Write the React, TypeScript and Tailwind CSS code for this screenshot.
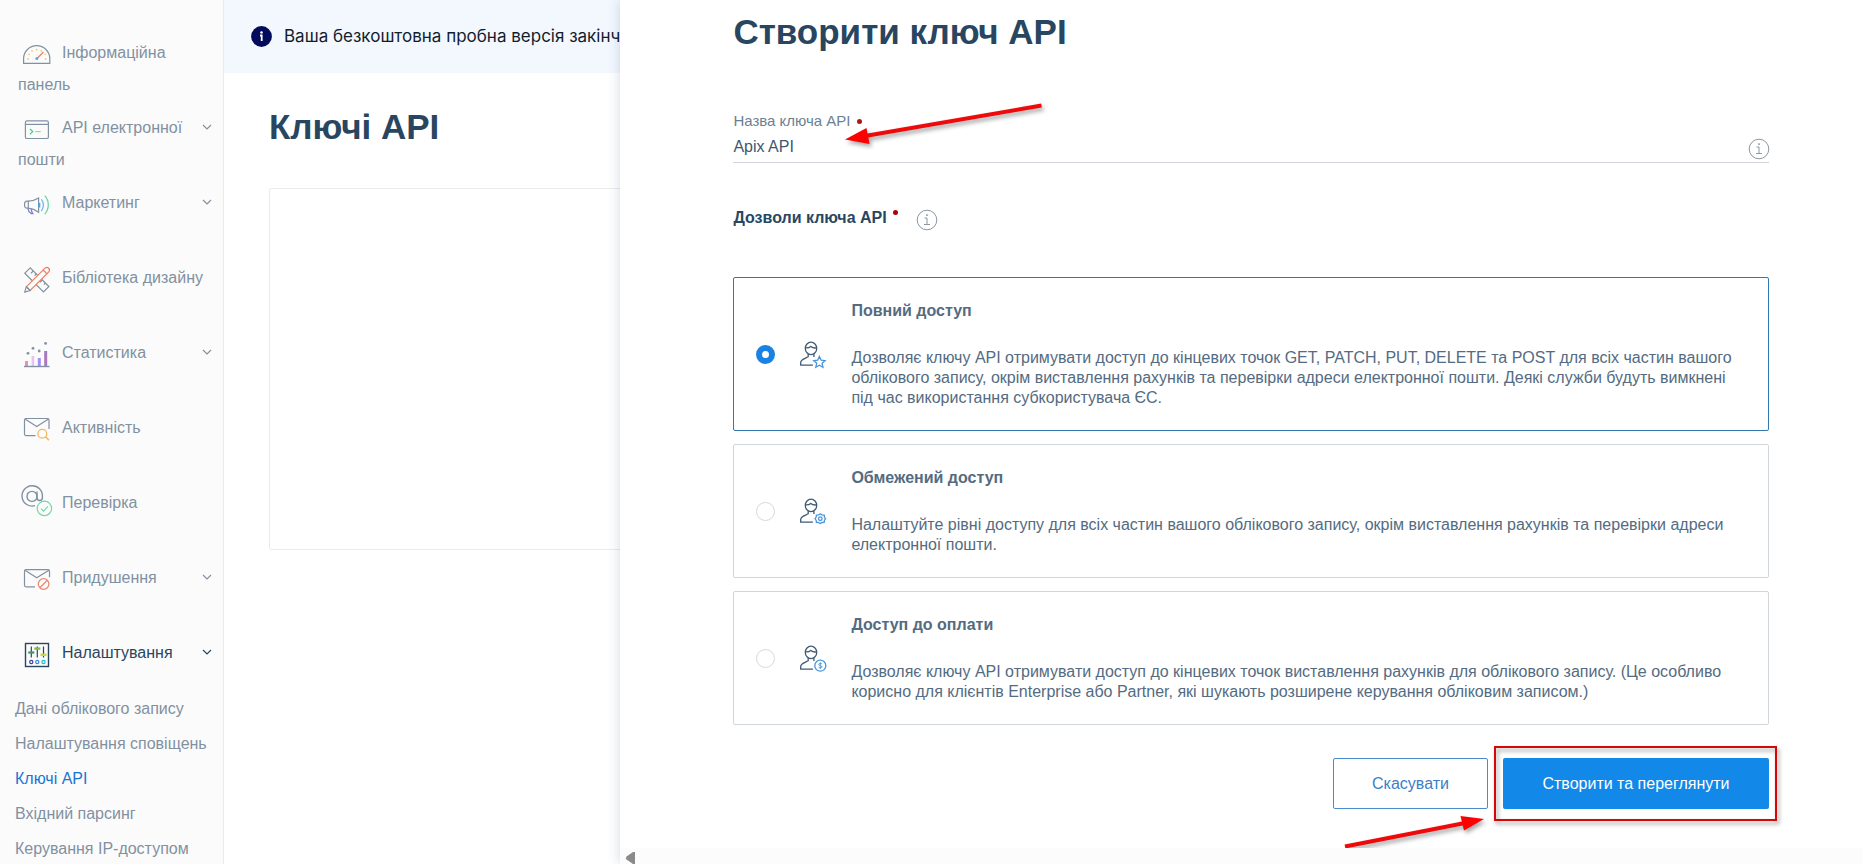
import React from 'react'
import { clsx } from 'clsx'

const IconBox = ({ children }: { children: React.ReactNode }) => (
  <svg
    viewBox="0 0 32 32"
    fill="none"
    stroke="currentColor"
    strokeWidth="1.2"
    className="-my-1 ml-[3px] mr-[9px] inline-block h-8 w-8 overflow-visible align-middle"
    aria-hidden="true"
  >
    {children}
  </svg>
)

const DashboardIcon = () => (
  <IconBox>
    <path d="M2.6 25.4V20.5a13.1 12.8 0 0 1 26.2 0v4.9z" />
    <path d="M16.5 20l6-6" stroke="#ef7c5c" />
    <circle cx="15.8" cy="20.6" r="1.5" fill="#5aa9e6" stroke="none" />
    <g fill="#f7c878" stroke="none">
      <circle cx="7" cy="21" r="0.9" />
      <circle cx="8" cy="16.3" r="0.9" />
      <circle cx="11" cy="13" r="0.9" />
      <circle cx="15.7" cy="11.7" r="0.9" />
      <circle cx="20.3" cy="13" r="0.9" />
      <circle cx="24.3" cy="16.3" r="0.9" />
      <circle cx="24.6" cy="21" r="0.9" />
    </g>
  </IconBox>
)

const TerminalIcon = () => (
  <IconBox>
    <rect x="4.4" y="7.9" width="23" height="17.6" rx="1.6" />
    <path d="M4.4 11.4h23" />
    <path d="M9 16l2.7 2.6L9 21.2" stroke="#3fd08f" />
    <path d="M14.3 18.6h5.4" stroke="#b5d56a" />
  </IconBox>
)

const MarketingIcon = () => (
  <IconBox>
    <path d="M7.3 13.2c3.6-.2 7.2-1.2 10.3-3.2v14.2c-3-2.2-6.7-3.7-10.3-4z" />
    <path d="M7.3 13.2H6.1a2.6 3.5 0 0 0 0 7h1.2" />
    <path d="M6.8 20.4c.4 2.5 1.6 4.2 3.3 5.2h1.7c-.9-1.3-1.5-3-1.6-4.7" stroke="#8079d6" />
    <path d="M18.3 15v4.5" stroke="#4aa3ea" strokeWidth="2" />
    <path d="M20.3 11.3c2.8 3 2.8 8.5 0 11.8" stroke="#62b5ee" />
    <path d="M23.7 7.6c4.8 5 4.8 13.5 0 18.6" stroke="#5fd6a0" />
  </IconBox>
)

const DesignIcon = () => (
  <IconBox>
    <path d="M9.2 4.8l-5.4 5.4 18.7 18.7 5.4-5.4z" />
    <path d="M12.2 8l-2.3 2.3M15.2 11l-1.6 1.6M21.2 17l-2.3 2.3M24.5 20l-1.6 1.6" />
    <path d="M5.3 23.8L24 5.1a2.7 2.7 0 0 1 3.8 3.8L9.2 27.5z" fill="#fbfbfb" stroke="#ef7c5c" />
    <path d="M22.2 7l3.8 3.8" stroke="#ef7c5c" />
    <path d="M5.3 23.8l-1.6 5.3 5.5-1.6z" />
  </IconBox>
)

const StatsIcon = () => (
  <IconBox>
    <g stroke="none">
      <rect x="4" y="23" width="3" height="5" fill="#ef8fb0" />
      <rect x="10.6" y="18" width="2.6" height="10" fill="#e9c3ee" />
      <rect x="16.8" y="20" width="3" height="8" fill="#a48ff5" />
      <rect x="23.2" y="13" width="3" height="15" fill="#a878c0" />
      <g fill="currentColor">
        <circle cx="7" cy="15.3" r="1.4" />
        <circle cx="12" cy="10.3" r="1.4" />
        <circle cx="18.2" cy="13" r="1.4" />
        <circle cx="24.6" cy="5.4" r="1.4" />
      </g>
    </g>
    <path d="M3 28.5h25.5" strokeWidth="1.4" />
  </IconBox>
)

const ActivityIcon = () => (
  <IconBox>
    <path d="M14.5 22.6H5a1.5 1.5 0 0 1-1.5-1.5V7A1.5 1.5 0 0 1 5 5.5h21.5A1.5 1.5 0 0 1 28 7v9" />
    <path d="M4 6l11.7 7.6L27.5 6" />
    <circle cx="21.3" cy="20.7" r="4.4" stroke="#f2b760" strokeWidth="1.3" />
    <path d="M24.5 23.9l3.5 3.3" stroke="#f2b760" strokeWidth="1.5" />
  </IconBox>
)

const ValidationIcon = () => (
  <IconBox>
    <path d="M14 17.7A10.2 10.2 0 1 1 21.4 8.5v1.3a2.7 2.7 0 0 1-5.4 0V3.5" strokeWidth="1.4" />
    <circle cx="11" cy="8.4" r="5" strokeWidth="1.4" />
    <circle cx="23.4" cy="20.4" r="7.2" stroke="#74d8a4" />
    <path d="M20 20.6l2.6 2.6 4.3-4.8" stroke="#74d8a4" />
  </IconBox>
)

const SuppressionIcon = () => (
  <IconBox>
    <path d="M14 23.8H5a1.5 1.5 0 0 1-1.5-1.5V8.2A1.5 1.5 0 0 1 5 6.7h22a1.5 1.5 0 0 1 1.5 1.5v6" />
    <path d="M4 7.2l11.7 7.6L28 7.2" />
    <circle cx="22.6" cy="21" r="5.3" stroke="#ec8a72" strokeWidth="1.3" />
    <path d="M18.9 24.7l7.4-7.4" stroke="#ec8a72" strokeWidth="1.3" />
  </IconBox>
)

const SettingsIcon = () => (
  <IconBox>
    <rect x="4.5" y="5.5" width="23" height="23" strokeWidth="1.4" />
    <path d="M10.3 8.5v11M16.3 8.5v11M22.5 8.5v11" />
    <path d="M7.3 14.5h6" stroke="#3f9e5f" strokeWidth="2.4" />
    <path d="M13.3 10.6h6" stroke="#7fbd4a" strokeWidth="2.4" />
    <path d="M19.5 16.8h6" stroke="#c9d844" strokeWidth="2.4" />
    <circle cx="10.3" cy="24" r="1.6" stroke="#3f3fa5" />
    <circle cx="16.3" cy="24" r="1.6" stroke="#3b8be0" />
    <circle cx="22.5" cy="24" r="1.6" stroke="#18c0d0" />
  </IconBox>
)

const Chevron = () => (
  <svg viewBox="0 0 10 6" fill="none" stroke="currentColor" strokeWidth="1.2" className="h-[6px] w-[10px]" aria-hidden="true">
    <path d="M1 1l4 4 4-4" />
  </svg>
)

const InfoIcon = () => (
  <svg viewBox="1 1 20 20" fill="none" stroke="#8d96a1" className="h-5 w-5 overflow-visible" aria-hidden="true">
    <circle cx="11" cy="11" r="9.8" />
    <path d="M8.5 9H11v6.5M8 15.5h6" />
    <path d="M11 5.2v1.7" strokeWidth="1.5" />
  </svg>
)

const badges = {
  star: <path d="M19.4 14.4l1.7 3.7 4 .5-3 2.7.9 4-3.6-2-3.6 2 .9-4-3-2.7 4-.5z" />,
  gear: (
    <>
      <path d="M20.3 14.9l1.8 1 2.1.1.2 2 1.1 1.7-1.1 1.7-.2 2-2.1.1-1.8 1-1.8-1-2.1-.1-.2-2-1.1-1.7 1.1-1.7.2-2 2.1-.1z" />
      <circle cx="20.3" cy="19.7" r="1.8" />
    </>
  ),
  dollar: (
    <>
      <circle cx="20.3" cy="19.7" r="5.5" />
      <path d="M22 18c-.6-.8-3.3-.9-3.3.4 0 1.5 3.3.8 3.3 2.5 0 1.4-2.8 1.3-3.5.3M20.3 16.3v6.8" strokeWidth="0.9" />
    </>
  ),
}

const UserIcon = ({ badge }: { badge: keyof typeof badges }) => (
  <svg viewBox="0 0 26 26" fill="none" stroke="#3f5a74" strokeWidth="1.3" className="h-[26px] w-[26px] shrink-0 overflow-visible" aria-hidden="true">
    <ellipse cx="11" cy="6.4" rx="5.7" ry="6.2" />
    <path d="M5.4 5.700c2.600.4 4-.2 5.400-1.300 1.500 1.400 3.200 1.900 5.800 1.500" />
    <path d="M8.200 12v2.800C5.500 16.500 1 17 .7 20.500v2.700h12.200M13.900 12v3" />
    <g stroke="#4a95dc">{badges[badge]}</g>
  </svg>
)

const navItems = [
  { label: 'Інформаційна панель', icon: <DashboardIcon /> },
  { label: 'API електронної пошти', icon: <TerminalIcon />, expandable: true },
  { label: 'Маркетинг', icon: <MarketingIcon />, expandable: true },
  { label: 'Бібліотека дизайну', icon: <DesignIcon /> },
  { label: 'Статистика', icon: <StatsIcon />, expandable: true },
  { label: 'Активність', icon: <ActivityIcon /> },
  { label: 'Перевірка', icon: <ValidationIcon /> },
  { label: 'Придушення', icon: <SuppressionIcon />, expandable: true },
  { label: 'Налаштування', icon: <SettingsIcon />, expandable: true, active: true },
]

const subItems = [
  { label: 'Дані облікового запису' },
  { label: 'Налаштування сповіщень' },
  { label: 'Ключі API', active: true },
  { label: 'Вхідний парсинг' },
  { label: 'Керування IP-доступом' },
]

const permissions = [
  {
    id: 'full',
    badge: 'star' as const,
    title: 'Повний доступ',
    text: 'Дозволяє ключу API отримувати доступ до кінцевих точок GET, PATCH, PUT, DELETE та POST для всіх частин вашого облікового запису, окрім виставлення рахунків та перевірки адреси електронної пошти. Деякі служби будуть вимкнені під час використання субкористувача ЄС.',
  },
  {
    id: 'restricted',
    badge: 'gear' as const,
    title: 'Обмежений доступ',
    text: 'Налаштуйте рівні доступу для всіх частин вашого облікового запису, окрім виставлення рахунків та перевірки адреси електронної пошти.',
  },
  {
    id: 'billing',
    badge: 'dollar' as const,
    title: 'Доступ до оплати',
    text: 'Дозволяє ключу API отримувати доступ до кінцевих точок виставлення рахунків для облікового запису. (Це особливо корисно для клієнтів Enterprise або Partner, які шукають розширене керування обліковим записом.)',
  },
]

const Sidebar = () => (
  <nav className="w-56 shrink-0 overflow-hidden border-r border-[#e9ebed] bg-[#fbfbfb] pt-[37px] text-[#8291a1]">
    <ul>
      {navItems.map((item) => (
        <li key={item.label} className={clsx('flex min-h-[75px] items-start', item.active && 'text-[#294661]')}>
          <a href="#" className={clsx('flex-1 pl-[18px] leading-8', !item.expandable && 'pr-3')}>
            {item.icon}
            {item.label}
          </a>
          {item.expandable && (
            <button type="button" aria-label={item.label} className="mr-[11px] flex h-[30px] items-center">
              <Chevron />
            </button>
          )}
        </li>
      ))}
    </ul>
    <ul className="-mt-[21px]">
      {subItems.map((item) => (
        <li key={item.label}>
          <a href="#" className={clsx('block whitespace-nowrap pl-[15px] leading-[35px]', item.active && 'text-[#1a75d2]')}>
            {item.label}
          </a>
        </li>
      ))}
    </ul>
  </nav>
)

const Drawer = () => {
  const [name, setName] = React.useState('Apix API')
  const [selected, setSelected] = React.useState('full')

  return (
    <aside className="absolute inset-y-0 right-0 flex w-[66.7%] flex-col bg-white shadow-[0_0_12px_rgba(40,60,100,0.2)]">
      <form className="flex-1 overflow-hidden pl-[113px] pr-[94px] pt-2" onSubmit={(e) => e.preventDefault()}>
        <h2 className="text-[35px] leading-[48px] font-bold text-[#294661]">Створити ключ API</h2>

        <div className="relative mt-[55px]">
          <label htmlFor="key-name" className="flex items-center gap-[6px] text-[15px] leading-5 text-[#6b7f92]">
            Назва ключа API
            <span className="h-[5px] w-[5px] rounded-full bg-[#b01818]" />
          </label>
          <div className="flex h-8 items-center border-b border-[#d1d5d9]">
            <input
              id="key-name"
              value={name}
              onChange={(e) => setName(e.target.value)}
              className="min-w-0 flex-1 bg-transparent text-[#40586f] outline-none"
            />
            <button type="button" aria-label="Назва ключа API" className="pt-1">
              <InfoIcon />
            </button>
          </div>
          <svg viewBox="0 0 204 46" className="pointer-events-none absolute -top-2 left-[110px] h-[46px] w-[204px] overflow-visible drop-shadow-[2px_3px_2px_rgba(0,0,0,0.35)]" aria-hidden="true">
            <path d="M198.5 2.5L22 33" stroke="#ee0a0a" strokeWidth="4" />
            <path d="M2 36.5L23.500 25l3 16z" fill="#ff0000" />
          </svg>
        </div>

        <fieldset className="mt-11">
          <legend className="flex h-[22px] items-center font-bold text-[#294661]">
            Дозволи ключа API
            <span className="mb-3 ml-[6px] h-[5px] w-[5px] rounded-full bg-[#b00000]" />
            <button type="button" aria-label="Дозволи ключа API" className="ml-[19px] pt-1">
              <InfoIcon />
            </button>
          </legend>
          <div className="mt-12 flex flex-col gap-[13px]">
            {permissions.map((item) => (
              <label
                key={item.id}
                className={clsx(
                  'flex items-center rounded-[2px] border px-[22px] pt-[23px] pb-[22px] text-[#546b81]',
                  selected === item.id ? 'border-[#3278b0]' : 'border-[#d1d6da]',
                )}
              >
                <input
                  type="radio"
                  name="permission"
                  value={item.id}
                  checked={selected === item.id}
                  onChange={() => setSelected(item.id)}
                  className="mr-[25px] h-[19px] w-[19px] shrink-0 appearance-none rounded-full border border-[#d5dade] bg-white checked:border-[6px] checked:border-[#1a82e2]"
                />
                <UserIcon badge={item.badge} />
                <span className="ml-[25px] flex flex-1 flex-col gap-[27px]">
                  <span className="leading-5 font-bold">{item.title}</span>
                  <span className="leading-5">{item.text}</span>
                </span>
              </label>
            ))}
          </div>
        </fieldset>

        <div className="mt-[33px] flex justify-end gap-[15px]">
          <div className="relative">
            <button type="button" className="h-[51px] w-[155px] rounded-[2px] border border-[#4a8ccb] text-[#3a7fc8]">
              Скасувати
            </button>
            <svg viewBox="0 0 144 36" className="pointer-events-none absolute top-[57px] left-[10px] h-9 w-36 overflow-visible drop-shadow-[2px_3px_2px_rgba(0,0,0,0.35)]" aria-hidden="true">
              <path d="M2 31.5L122 8" stroke="#ee0a0a" strokeWidth="4" />
              <path d="M141 4l-23.5-3L121 15.500z" fill="#ff0000" />
            </svg>
          </div>
          <div className="relative">
            <button type="submit" className="h-[51px] w-[266px] rounded-[2px] bg-[#1288e8] text-white">
              Створити та переглянути
            </button>
            <span className="pointer-events-none absolute -top-3 -right-2 -bottom-3 -left-[9px] border-2 border-[#d40808] drop-shadow-[2px_3px_2px_rgba(0,0,0,0.4)]" />
          </div>
        </div>
      </form>
      <div className="flex h-4 items-end bg-[#fcfcfc] pl-[6px]">
        <svg viewBox="0 0 9 12" className="h-3 w-[9px]" fill="#8a8a8a" aria-hidden="true">
          <path d="M9 0v12H7L.5 7.500Q-.5 6 .5 4.500L7 0z" />
        </svg>
      </div>
    </aside>
  )
}

const App = () => {
  return (
    <div className="relative flex h-screen overflow-hidden bg-white font-['Liberation_Sans',Arial,sans-serif] text-base">
      <Sidebar />
      <main className="min-w-0 flex-1">
        <div className="flex h-[73px] items-center gap-3 bg-[#f3f8ff] pl-[27px] font-['Inter',sans-serif] text-[17px] text-[#121c2d]">
          <svg viewBox="0 0 21 21" className="h-[21px] w-[21px]" aria-hidden="true">
            <circle cx="10.5" cy="10.5" r="10.4" fill="#030b5d" />
            <circle cx="10.5" cy="6.5" r="1.3" fill="#fff" />
            <path d="M9 9.5h1.700V15" stroke="#fff" strokeWidth="1.8" fill="none" />
          </svg>
          <p className="whitespace-nowrap">Ваша безкоштовна пробна версія закінчується</p>
        </div>
        <div className="px-[45px] pt-[30px]">
          <h1 className="text-[35px] leading-[48px] font-bold text-[#294661]">Ключі API</h1>
          <div className="mt-[37px] h-[362px] rounded-[2px] border border-[#e9ebed]" />
        </div>
      </main>
      <Drawer />
    </div>
  )
}

export default App
